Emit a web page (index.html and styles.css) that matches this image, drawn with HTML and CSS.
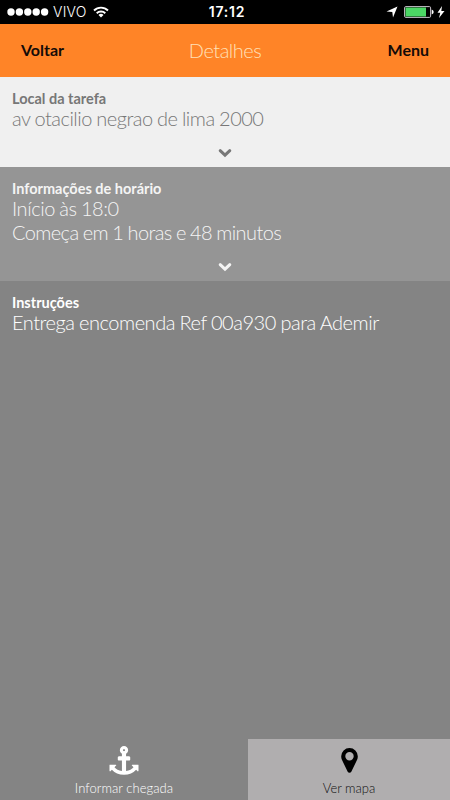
FILE: index.html
```html
<!DOCTYPE html>
<html lang="pt-BR">
<head>
<meta charset="utf-8">
<title>Detalhes</title>
<link rel="stylesheet" href="styles.css">
</head>
<body>
<div class="app">
  <div class="status">
    <div class="carrier">
      <svg class="signal" viewBox="0 0 42 8"><circle cx="4" cy="4" r="3.700"/><circle cx="12.400" cy="4" r="3.700"/><circle cx="20.800" cy="4" r="3.700"/><circle cx="29.200" cy="4" r="3.700"/><circle cx="37.600" cy="4" r="3.700"/></svg>
      <span class="operator">VIVO</span>
      <svg class="wifi" viewBox="0 0 16 12"><path d="M1 4.500a10 10 0 0 1 14 0M3.700 7.200a6.200 6.200 0 0 1 8.600 0" fill="none" stroke="#fff" stroke-width="1.900"/><path d="M5.500 9a3.600 3.600 0 0 1 5 0L8 11.500z"/></svg>
    </div>
    <span class="clock">17:12</span>
    <div class="power">
      <svg class="location" viewBox="0 0 12 12"><path d="M11.500.5 7 11.500 6.300 6 .5 5.500z"/></svg>
      <svg class="battery" viewBox="0 0 30 12"><rect x=".6" y=".6" width="26" height="10.800" rx="1.200" fill="none" stroke="#c9c3cc" stroke-width="1"/><rect x="1.500" y="1.500" width="20.500" height="9" fill="#4cd765"/><path d="M27.700 3.600q2 .6 2 2.400t-2 2.400z"/></svg>
      <svg class="bolt" viewBox="0 0 8 12"><path d="M5 0 .5 6.700h2.800L2 12l5.500-7H4.300z"/></svg>
    </div>
  </div>
  <header class="navbar">
    <span class="nav-action">Voltar</span>
    <h1 class="nav-title">Detalhes</h1>
    <span class="nav-action nav-menu">Menu</span>
  </header>
  <section class="panel place">
    <h2>Local da tarefa</h2>
    <p>av otacilio negrao de lima 2000</p>
    <svg class="chevron" viewBox="0 0 14 10"><path d="m2.200 2.700 4.800 4.500 4.800-4.500"/></svg>
  </section>
  <section class="panel schedule">
    <h2>Informações de horário</h2>
    <p><span class="start">Início às 18:0</span><br>Começa em 1 horas e 48 minutos</p>
    <svg class="chevron" viewBox="0 0 14 10"><path d="m2.200 2.700 4.800 4.500 4.800-4.500"/></svg>
  </section>
  <section class="panel notes">
    <h2>Instruções</h2>
    <p>Entrega encomenda Ref 00a930 para Ademir</p>
  </section>
  <footer class="actions">
    <div class="action arrive">
      <svg class="anchor" viewBox="0 128 1792 1792"><path d="M960 384q0-26-19-45t-45-19-45 19-19 45 19 45 45 19 45-19 19-45zm832 928v352q0 22-20 30-8 2-12 2-12 0-23-9l-93-93q-119 143-318.500 226.500t-429.500 83.500-429.500-83.500-318.500-226.500l-93 93q-9 9-23 9-4 0-12-2-20-8-20-30v-352q0-14 9-23t23-9h352q22 0 30 20 8 19-7 35l-100 100q67 91 189.500 153.500t271.500 82.500v-647h-192q-26 0-45-19t-19-45v-128q0-26 19-45t45-19h192v-163q-58-34-93-92.500t-35-128.500q0-106 75-181t181-75 181 75 75 181q0 70-35 128.500t-93 92.500v163h192q26 0 45 19t19 45v128q0 26-19 45t-45 19h-192v647q149-20 271.500-82.500t189.500-153.500l-100-100q-15-16-7-35 8-20 30-20h352q14 0 23 9t9 23z"/></svg>
      <span class="arrive-label">Informar chegada</span>
    </div>
    <div class="action map">
      <svg class="pin" viewBox="0 0 17 25"><path fill-rule="evenodd" d="M8.500 0A8.300 8.300 0 0 0 .2 8.300q0 2 .7 3.500L6.700 23.700q.6 1.100 1.800 1.100t1.800-1.100l5.800-11.900q.7-1.500.7-3.500A8.300 8.300 0 0 0 8.500 0zm0 4.100a4.200 4.200 0 1 1 0 8.400 4.200 4.200 0 0 1 0-8.400z"/></svg>
      <span>Ver mapa</span>
    </div>
  </footer>
</div>
</body>
</html>
```
FILE: styles.css
```css
* { box-sizing: border-box; }
body { margin: 0; font-family: Lato, sans-serif; }
h1, h2, p { margin: 0; }
svg { display: block; flex: none; }

.app {
  display: flex;
  flex-direction: column;
  height: 800px;
  background: #848484;
}

.status {
  display: grid;
  grid-template-columns: 1fr auto 1fr;
  align-items: center;
  height: 24px;
  padding: 0 5px 0 7px;
  background: #000;
  color: #fff;
  fill: #fff;
  font: 14px/24px Inter, sans-serif;
}
.carrier, .power { display: flex; align-items: center; }
.power { justify-content: flex-end; }
.signal { width: 42px; height: 8px; }
.operator { margin-left: 4px; font-weight: 300; letter-spacing: 0.25px; }
.wifi { width: 16px; height: 12px; margin-left: 6px; }
.clock { padding-left: 2px; font-weight: 600; letter-spacing: 0.8px; }
.location { width: 12px; height: 12px; margin-right: 6px; }
.battery { width: 30px; height: 12px; margin-right: 3px; }
.bolt { width: 8px; height: 12px; }

.navbar {
  display: grid;
  grid-template-columns: 1fr auto 1fr;
  align-items: center;
  height: 53px;
  padding: 0 21px 3px;
  background: #ff8427;
}
.nav-action { font-size: 16px; font-weight: 700; color: #140b08; }
.nav-menu { text-align: right; }
.nav-title { padding-top: 1px; font-size: 20px; font-weight: 300; letter-spacing: -0.5px; color: #ffe0b8; }

.panel { display: flex; flex-direction: column; padding: 12px 12px 0; }
.panel h2 { font-size: 14.5px; line-height: 19px; font-weight: 700; }
.panel p {
  margin-top: -2px;
  font-size: 20px;
  line-height: 24px;
  font-weight: 300;
  letter-spacing: -0.5px;
  word-spacing: -0.4px;
}
.place { height: 90px; background: #f0f0f0; color: #777; }
.schedule { height: 114px; background: #959595; color: #f4f4f4; }
.schedule p { letter-spacing: -0.6px; word-spacing: -0.6px; }
.schedule .start { letter-spacing: -0.45px; }
.place p { letter-spacing: -0.52px; }
.notes { flex: 1; color: #fff; }
.notes p { letter-spacing: -0.47px; }
.chevron {
  width: 14px;
  height: 10px;
  margin: 18px auto 0;
  fill: none;
  stroke: currentColor;
  stroke-width: 3;
  stroke-linecap: round;
}

.actions { display: flex; height: 61px; }
.action {
  display: flex;
  flex-direction: column;
  align-items: center;
  font-size: 13px;
  line-height: 16px;
  font-weight: 300;
}
.arrive { width: 248px; color: #fff; fill: #fff; }
.arrive-label { letter-spacing: 0.06px; }
.map { flex: 1; background: #b0aeaf; color: #111; fill: #000; }
.anchor { width: 30px; height: 29px; margin: 7px 0 5px; }
.pin { width: 17px; height: 25px; margin: 9px 0 7px; }
```
